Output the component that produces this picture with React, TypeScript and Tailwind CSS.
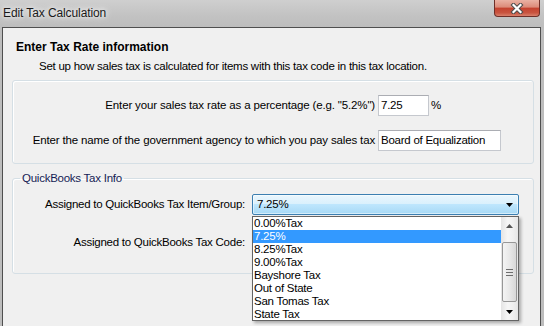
import { ChevronDown } from 'lucide-react'

const items = [
	'0.00%Tax',
	'7.25%',
	'8.25%Tax',
	'9.00%Tax',
	'Bayshore Tax',
	'Out of State',
	'San Tomas Tax',
	'State Tax',
]

function Triangle({ dir }: { dir: 'up' | 'down' }) {
	return (
		<svg width="7" height="4" viewBox="0 0 7 4">
			{dir === 'down' ? (
				<path d="M0 0 H7 L3.5 4 Z" fill="#000" />
			) : (
				<path d="M0 4 H7 L3.5 0 Z" fill="#555" />
			)}
		</svg>
	)
}

function Dropdown() {
	return (
		<div className="absolute left-0 top-[22px] z-10 w-[267px] border border-[#646464] bg-white shadow-[2px_2px_3px_rgba(0,0,0,0.3)]">
			<div className="flex h-[103px] overflow-hidden">
				<ul className="flex-1">
					{items.map((item, index) => (
						<li
							key={index}
							className={
								index === 1
									? 'h-[13px] pl-[1px] leading-[13px] bg-[#3399ff] text-white'
									: 'h-[13px] pl-[1px] leading-[13px] text-black'
							}
						>
							{item}
						</li>
					))}
				</ul>
				{/* scrollbar */}
				<div className="flex w-[17px] flex-col bg-[linear-gradient(to_right,#e4e4e4,#f6f6f6_40%,#f0f0f0_70%,#e6e6e6)]">
					<div className="flex h-[17px] items-center justify-center">
						<Triangle dir="up" />
					</div>
					<div className="flex-1">
						<div className="mx-[1px] mt-[8px] flex h-[60px] flex-col items-center justify-center gap-[2px] rounded-[2px] border border-[#979797] bg-[linear-gradient(to_right,#f4f4f4,#e8e8e8_50%,#d8d8d8)]">
							<div className="h-[1px] w-[7px] bg-[#6d6d6d]" />
							<div className="h-[1px] w-[7px] bg-[#6d6d6d]" />
							<div className="h-[1px] w-[7px] bg-[#6d6d6d]" />
						</div>
					</div>
					<div className="flex h-[17px] items-center justify-center">
						<Triangle dir="down" />
					</div>
				</div>
			</div>
		</div>
	)
}

export default function App() {
	return (
		<div className="flex h-[326px] w-[544px] flex-col overflow-hidden bg-[#bdbdbd] font-['Liberation_Sans',Arial,sans-serif] text-[11.5px] tracking-[-0.25px] text-black">
			{/* Title bar */}
			<div className="flex h-[27px] shrink-0 items-start justify-between bg-[linear-gradient(to_bottom,#cfcfcf,#c2c2c2_60%,#bdbdbd)]">
				<div className="pl-[3px] pt-[6px] text-[12px] leading-[15px] tracking-[-0.1px] text-[#1a1a1a] [text-shadow:0_0_8px_#fff,0_0_4px_#fff]">
					Edit Tax Calculation
				</div>
				<div className="mr-[4px] flex h-[17px] w-[46px] items-center justify-center rounded-b-[4px] border border-t-0 border-[#6e2f28] bg-[linear-gradient(to_bottom,#eab2a4,#dc8b79_45%,#c4422f_50%,#c9543f_80%,#d9806c)]">
					<svg width="14" height="11" viewBox="0 0 14 11">
						<path d="M3.5 2 L10.5 9 M10.5 2 L3.5 9" stroke="#4d4d4d" strokeWidth="4.2" strokeLinecap="square" />
						<path d="M3.5 2 L10.5 9 M10.5 2 L3.5 9" stroke="#fff" strokeWidth="2.2" strokeLinecap="square" />
					</svg>
				</div>
			</div>

			{/* Dialog body */}
			<div className="ml-[2px] w-[539px] flex-1 border border-b-0 border-[#4f4f4f] bg-[#f0f0f0]">
				<div className="pl-[13px] pt-[11px] text-[12px] font-bold leading-[16px] tracking-[0px]">Enter Tax Rate information</div>
				<div className="mt-[3px] pl-[36px] leading-[16px]">
					Set up how sales tax is calculated for items with this tax code in this tax location.
				</div>

				<div className="ml-[9px] mt-[6px] h-[84px] w-[522px] rounded-[3px] border border-[#d5dfe5] pt-[14px] shadow-[inset_1px_1px_0_#fff]">
					<div className="flex h-[21px] items-center">
						<div className="w-[362px] shrink-0 text-right tracking-[-0.15px]">Enter your sales tax rate as a percentage (e.g. "5.2%")</div>
						<div className="ml-[3px] flex h-[21px] w-[51px] items-center border border-[#c5c8ce] border-t-[#abadb3] bg-white pl-[2px]">
							7.25
						</div>
						<div className="ml-[2px]">%</div>
					</div>
					<div className="mt-[14px] flex h-[21px] items-center">
						<div className="w-[362px] shrink-0 text-right tracking-[-0.15px]">Enter the name of the government agency to which you pay sales tax</div>
						<div className="ml-[3px] flex h-[21px] w-[123px] items-center border border-[#c5c8ce] border-t-[#abadb3] bg-white pl-[2px]">
							Board of Equalization
						</div>
					</div>
				</div>

				<fieldset className="ml-[9px] mt-[7px] h-[103px] w-[522px] rounded-[3px] border border-[#d5dfe5] shadow-[inset_1px_1px_0_#fff]">
					<legend className="ml-[7px] px-[2px] leading-[14px] text-[#151c55]">QuickBooks Tax Info</legend>
					<div className="pt-[9px]">
						<div className="flex h-[21px] items-center">
							<div className="w-[232px] shrink-0 text-right">Assigned to QuickBooks Tax Item/Group:</div>
							<div className="relative ml-[7px] w-[267px]">
								<div className="flex h-[21px] items-center justify-between rounded-[2px] border border-[#3c7fb1] bg-[linear-gradient(to_bottom,#eaf6fd,#d9f0fc_50%,#bee6fd_50%,#a7d9f5)] pl-[4px] pr-[5px] shadow-[inset_0_0_0_1px_rgba(255,255,255,0.5)]">
									<span>7.25%</span>
									<Triangle dir="down" />
								</div>
								<Dropdown />
							</div>
						</div>
						<div className="mt-[17px] flex h-[21px] items-center">
							<div className="w-[232px] shrink-0 text-right">Assigned to QuickBooks Tax Code:</div>
							<div className="ml-[7px] flex h-[21px] w-[267px] items-center justify-end rounded-[2px] border border-[#707070] bg-[#ececec] pr-[4px]">
								<ChevronDown size={10} />
							</div>
						</div>
					</div>
				</fieldset>
			</div>
		</div>
	)
}
